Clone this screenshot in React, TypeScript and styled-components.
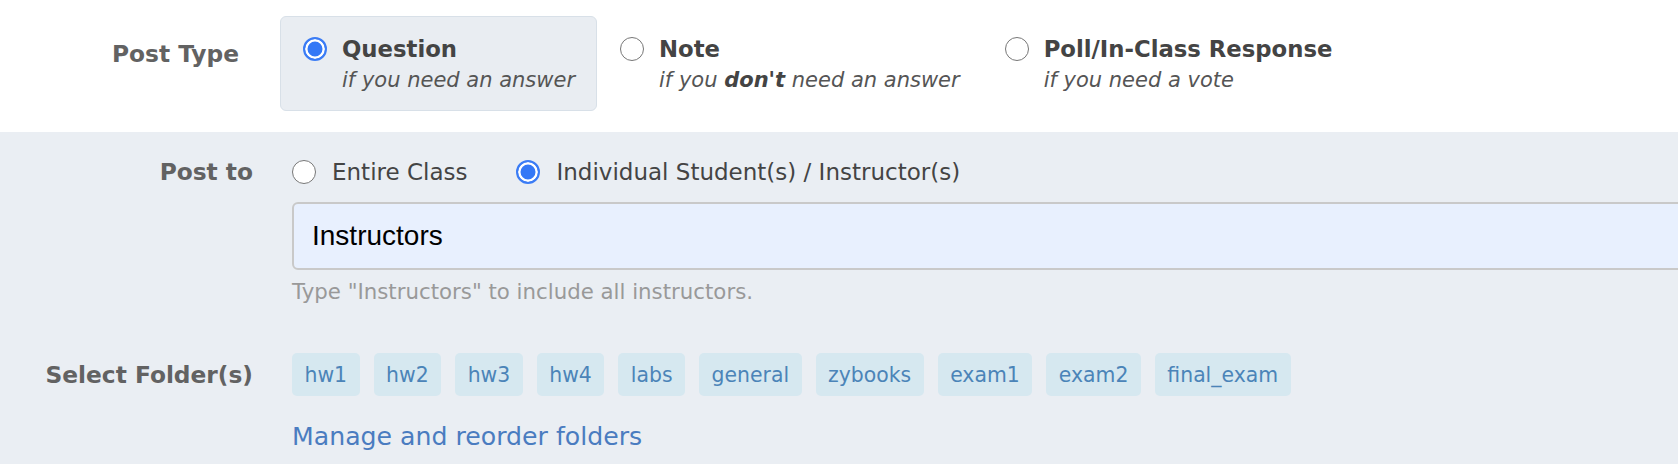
import React from "react";
import styled, { createGlobalStyle, css } from "styled-components";

const GlobalStyle = createGlobalStyle`
  html, body {
    margin: 0;
    padding: 0;
  }
  body {
    font-family: "DejaVu Sans", "Noto Sans", sans-serif;
    background: #eaeef3;
    overflow: hidden;
  }
`;

const Page = styled.div`
  display: flex;
  flex-direction: column;
  min-height: 100vh;
  width: 1678px;
  overflow: hidden;
`;

const TypeSection = styled.section`
  background: #ffffff;
  display: grid;
  grid-template-columns: 239px auto;
  column-gap: 41px;
  align-items: start;
  padding: 16px 0 21px;
`;

const FieldLabel = styled.div<{ $top?: number; $line?: number }>`
  font-weight: bold;
  font-size: 23.3px;
  line-height: ${(p) => p.$line ?? 32}px;
  color: #626262;
  text-align: right;
  padding-top: ${(p) => p.$top ?? 0}px;
  white-space: nowrap;
`;

const OptionList = styled.div`
  display: flex;
  align-items: flex-start;
`;

const TypeOption = styled.label<{ $selected?: boolean }>`
  display: flex;
  align-items: flex-start;
  gap: 15px;
  padding: 16px 21px 15px 22px;
  border: 1px solid transparent;
  border-radius: 6px;
  cursor: pointer;
  ${(p) =>
    p.$selected &&
    css`
      background: #e9edf2;
      border-color: #d8e0e8;
    `}
`;

const Radio = styled.span<{ $checked?: boolean }>`
  flex: none;
  box-sizing: border-box;
  width: 24px;
  height: 24px;
  border-radius: 50%;
  margin-top: 4px;
  ${(p) =>
    p.$checked
      ? css`
          border: 2px solid #3b7cf5;
          background: #3478f6;
          box-shadow: inset 0 0 0 2.5px #ffffff;
        `
      : css`
          border: 1.5px solid #777777;
          background: #ffffff;
        `}
`;

const OptionText = styled.div`
  display: flex;
  flex-direction: column;
`;

const OptionTitle = styled.span`
  font-weight: bold;
  font-size: 22.75px;
  line-height: 32px;
  color: #444444;
  white-space: nowrap;
`;

const OptionHint = styled.span`
  font-style: italic;
  font-size: 21px;
  line-height: 30px;
  color: #555555;
  white-space: nowrap;

  b {
    font-weight: bold;
    color: #444444;
  }
`;

const FormSection = styled.section`
  flex: 1;
  background: #eaeef3;
  display: flex;
  flex-direction: column;
  padding-top: 23.5px;
`;

const FieldRow = styled.div<{ $mt?: number }>`
  display: grid;
  grid-template-columns: 253px 1450px;
  column-gap: 39px;
  align-items: start;
  margin-top: ${(p) => p.$mt ?? 0}px;
`;

const FieldBody = styled.div`
  display: flex;
  flex-direction: column;
  align-items: flex-start;
`;

const RadioGroup = styled.div`
  display: flex;
  align-items: center;
  gap: 49px;
`;

const RadioOption = styled.label`
  display: flex;
  align-items: center;
  gap: 16px;
  font-size: 23px;
  line-height: 32px;
  color: #444444;
  white-space: nowrap;
  cursor: pointer;

  ${Radio} {
    margin-top: 0;
  }
`;

const RecipientInput = styled.input`
  box-sizing: border-box;
  width: 100%;
  height: 68px;
  margin-top: 14.5px;
  padding: 0 18px;
  border: 2px solid #c9c9c9;
  border-radius: 6px;
  background: #e8f0fe;
  font-family: "Liberation Sans", Arial, sans-serif;
  font-size: 28px;
  color: #000000;
  outline: none;
`;

const HelpText = styled.div`
  margin-top: 8px;
  font-size: 21.3px;
  line-height: 28px;
  color: #999999;
  white-space: nowrap;
`;

const ChipList = styled.div`
  display: flex;
  flex-wrap: wrap;
  gap: 14px;
`;

const FolderChip = styled.span`
  display: inline-flex;
  align-items: center;
  height: 43px;
  padding: 0 12.5px;
  border-radius: 5px;
  background: #d6e8f0;
  color: #4b84b8;
  font-size: 20.4px;
  white-space: nowrap;
  cursor: pointer;
`;

const ManageLink = styled.a`
  margin-top: 24px;
  font-size: 25.2px;
  line-height: 34px;
  color: #4a7cc0;
  text-decoration: none;
  cursor: pointer;
  white-space: nowrap;
`;

const folders = [
  "hw1",
  "hw2",
  "hw3",
  "hw4",
  "labs",
  "general",
  "zybooks",
  "exam1",
  "exam2",
  "final_exam",
];

export default function App() {
  return (
    <>
      <GlobalStyle />
      <Page>
        <TypeSection>
          <FieldLabel $top={22}>Post Type</FieldLabel>
          <OptionList>
            <TypeOption $selected>
              <Radio $checked />
              <OptionText>
                <OptionTitle>Question</OptionTitle>
                <OptionHint>if you need an answer</OptionHint>
              </OptionText>
            </TypeOption>
            <TypeOption>
              <Radio />
              <OptionText>
                <OptionTitle>Note</OptionTitle>
                <OptionHint>
                  if you <b>don't</b> need an answer
                </OptionHint>
              </OptionText>
            </TypeOption>
            <TypeOption>
              <Radio />
              <OptionText>
                <OptionTitle>Poll/In-Class Response</OptionTitle>
                <OptionHint>if you need a vote</OptionHint>
              </OptionText>
            </TypeOption>
          </OptionList>
        </TypeSection>

        <FormSection>
          <FieldRow>
            <FieldLabel>Post to</FieldLabel>
            <FieldBody>
              <RadioGroup>
                <RadioOption>
                  <Radio />
                  Entire Class
                </RadioOption>
                <RadioOption>
                  <Radio $checked />
                  Individual Student(s) / Instructor(s)
                </RadioOption>
              </RadioGroup>
              <RecipientInput defaultValue="Instructors" />
              <HelpText>Type "Instructors" to include all instructors.</HelpText>
            </FieldBody>
          </FieldRow>

          <FieldRow $mt={47}>
            <FieldLabel $line={43}>Select Folder(s)</FieldLabel>
            <FieldBody>
              <ChipList>
                {folders.map((f) => (
                  <FolderChip key={f}>{f}</FolderChip>
                ))}
              </ChipList>
              <ManageLink>Manage and reorder folders</ManageLink>
            </FieldBody>
          </FieldRow>
        </FormSection>
      </Page>
    </>
  );
}
